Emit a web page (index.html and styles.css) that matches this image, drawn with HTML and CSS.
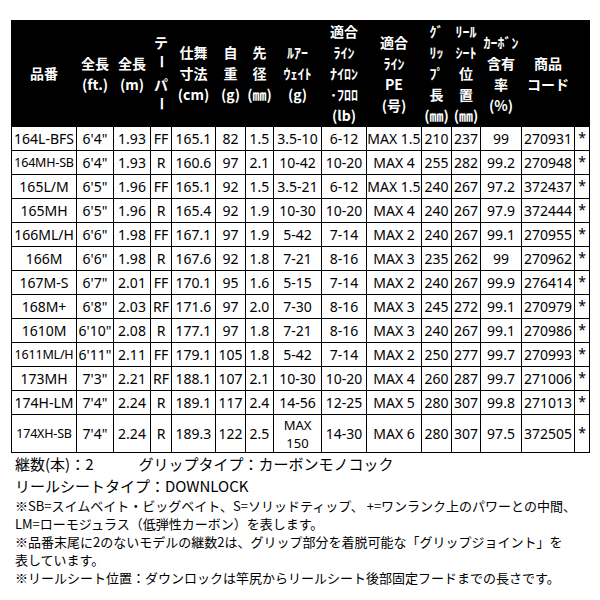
FILE: index.html
```html
<!DOCTYPE html>
<html lang="ja">
<head>
<meta charset="utf-8">
<title>Spec</title>
<link rel="stylesheet" href="styles.css">
</head>
<body>
<table class="spec">
<colgroup>
<col class="w65"><col class="w37"><col class="w37"><col class="w21"><col class="w44"><col class="w30"><col class="w28"><col class="w48"><col class="w45"><col class="w55"><col class="w30"><col class="w29"><col class="w41"><col class="w53"><col class="w15">
</colgroup>
<thead>
<tr>
<th>品番</th>
<th>全長<br>(ft.)</th>
<th>全長<br>(m)</th>
<th>テ<br><span class="v">ー</span><br>パ<br><span class="v">ー</span></th>
<th>仕舞<br>寸法<br>(cm)</th>
<th>自<br>重<br>(g)</th>
<th>先<br>径<br>(㎜)</th>
<th>ﾙｱｰ<br>ｳｪｲﾄ<br>(g)</th>
<th>適合<br>ﾗｲﾝ<br>ﾅｲﾛﾝ<br>･ﾌﾛﾛ<br>(lb)</th>
<th>適合<br>ﾗｲﾝ<br>PE<br>(号)</th>
<th>ｸﾞ<br>ﾘｯ<br>ﾌﾟ<br>長<br>(㎜)</th>
<th>ﾘｰﾙ<br>ｼｰﾄ<br>位<br>置<br>(㎜)</th>
<th>ｶｰﾎﾞﾝ<br>含有<br>率<br>(%)</th>
<th>商品<br>コード</th>
<th></th>
</tr>
</thead>
<tbody>
<tr><td>164L-BFS</td><td>6'4"</td><td>1.93</td><td>FF</td><td>165.1</td><td>82</td><td>1.5</td><td>3.5-10</td><td>6-12</td><td>MAX 1.5</td><td>210</td><td>237</td><td>99</td><td>270931</td><td class="ast">*</td></tr>
<tr><td class="small">164MH-SB</td><td>6'4"</td><td>1.93</td><td>R</td><td>160.6</td><td>97</td><td>2.1</td><td>10-42</td><td>10-20</td><td>MAX 4</td><td>255</td><td>282</td><td>99.2</td><td>270948</td><td class="ast">*</td></tr>
<tr><td>165L/M</td><td>6'5"</td><td>1.96</td><td>FF</td><td>165.1</td><td>92</td><td>1.5</td><td>3.5-21</td><td>6-12</td><td>MAX 1.5</td><td>240</td><td>267</td><td>97.2</td><td>372437</td><td class="ast">*</td></tr>
<tr><td>165MH</td><td>6'5"</td><td>1.96</td><td>R</td><td>165.4</td><td>92</td><td>1.9</td><td>10-30</td><td>10-20</td><td>MAX 4</td><td>240</td><td>267</td><td>97.9</td><td>372444</td><td class="ast">*</td></tr>
<tr><td>166ML/H</td><td>6'6"</td><td>1.98</td><td>FF</td><td>167.1</td><td>97</td><td>1.9</td><td>5-42</td><td>7-14</td><td>MAX 2</td><td>240</td><td>267</td><td>99.1</td><td>270955</td><td class="ast">*</td></tr>
<tr><td>166M</td><td>6'6"</td><td>1.98</td><td>R</td><td>167.6</td><td>92</td><td>1.8</td><td>7-21</td><td>8-16</td><td>MAX 3</td><td>235</td><td>262</td><td>99</td><td>270962</td><td class="ast">*</td></tr>
<tr><td>167M-S</td><td>6'7"</td><td>2.01</td><td>FF</td><td>170.1</td><td>95</td><td>1.6</td><td>5-15</td><td>7-14</td><td>MAX 2</td><td>240</td><td>267</td><td>99.9</td><td>276414</td><td class="ast">*</td></tr>
<tr><td>168M+</td><td>6'8"</td><td>2.03</td><td>RF</td><td>171.6</td><td>97</td><td>2.0</td><td>7-30</td><td>8-16</td><td>MAX 3</td><td>245</td><td>272</td><td>99.1</td><td>270979</td><td class="ast">*</td></tr>
<tr><td>1610M</td><td>6'10"</td><td>2.08</td><td>R</td><td>177.1</td><td>97</td><td>1.8</td><td>7-21</td><td>8-16</td><td>MAX 3</td><td>240</td><td>267</td><td>99.1</td><td>270986</td><td class="ast">*</td></tr>
<tr><td class="small">1611ML/H</td><td>6'11"</td><td>2.11</td><td>FF</td><td>179.1</td><td>105</td><td>1.8</td><td>5-42</td><td>7-14</td><td>MAX 2</td><td>250</td><td>277</td><td>99.7</td><td>270993</td><td class="ast">*</td></tr>
<tr><td>173MH</td><td>7'3"</td><td>2.21</td><td>RF</td><td>188.1</td><td>107</td><td>2.1</td><td>10-30</td><td>10-20</td><td>MAX 4</td><td>260</td><td>287</td><td>99.7</td><td>271006</td><td class="ast">*</td></tr>
<tr><td>174H-LM</td><td>7'4"</td><td>2.24</td><td>R</td><td>189.1</td><td>117</td><td>2.4</td><td>14-56</td><td>12-25</td><td>MAX 5</td><td>280</td><td>307</td><td>99.8</td><td>271013</td><td class="ast">*</td></tr>
<tr class="tall"><td class="small">174XH-SB</td><td>7'4"</td><td>2.24</td><td>R</td><td>189.3</td><td>122</td><td>2.5</td><td class="two">MAX<br>150</td><td>14-30</td><td>MAX 6</td><td>280</td><td>307</td><td>97.5</td><td>372505</td><td class="ast">*</td></tr>
</tbody>
</table>
<div class="notes">
<p class="big">継数(本)：2　　　グリップタイプ：カーボンモノコック</p>
<p class="big">リールシートタイプ：DOWNLOCK</p>
<p class="sm">※SB=スイムベイト・ビッグベイト、S=ソリッドティップ、 +=ワンランク上のパワーとの中間、<br>LM=ローモジュラス（低弾性カーボン）を表します。</p>
<p class="sm">※品番末尾に2のないモデルの継数2は、グリップ部分を着脱可能な「グリップジョイント」を<br>表しています。</p>
<p class="sm">※リールシート位置：ダウンロックは竿尻からリールシート後部固定フードまでの長さです。</p>
</div>
</body>
</html>
```

FILE: styles.css
```css
html, body {
  margin: 0;
  background: #fff;
}
body {
  padding: 20px 0 0 11px;
  font-family: "Noto Sans", "Noto Sans CJK JP", sans-serif;
  color: #000;
}
.spec {
  border-collapse: collapse;
  table-layout: fixed;
  width: 578px;
}
.w65 { width: 65px; }
.w37 { width: 37px; }
.w21 { width: 21px; }
.w44 { width: 44px; }
.w30 { width: 30px; }
.w28 { width: 28px; }
.w48 { width: 48px; }
.w45 { width: 45px; }
.w55 { width: 55px; }
.w29 { width: 29px; }
.w41 { width: 41px; }
.w53 { width: 53px; }
.w15 { width: 15px; }

.spec thead tr { height: 105px; }
.spec th {
  background: #000;
  color: #fff;
  font-family: "Noto Sans CJK JP", sans-serif;
  font-weight: bold;
  font-size: 14px;
  line-height: 21px;
  padding: 0;
  border: 1px solid #000;
  text-align: center;
  vertical-align: middle;
  white-space: nowrap;
}
.v {
  display: inline-block;
  writing-mode: vertical-rl;
}
.spec tbody tr { height: 24px; }
.spec tbody tr.tall { height: 35px; }
.spec td {
  border: 1px solid #000;
  padding: 0;
  text-align: center;
  vertical-align: middle;
  font-size: 14px;
  line-height: 17px;
  white-space: nowrap;
  overflow: visible;
}
.spec td.small { font-size: 12.5px; letter-spacing: -0.2px; }
.spec td.two { font-size: 13px; line-height: 18px; padding-top: 1px; }
.spec td.ast { vertical-align: middle; padding-bottom: 2px; }

.notes {
  padding-left: 4px;
  font-family: "Noto Sans CJK JP", sans-serif;
}
.notes p { margin: 0; }
.notes .big {
  font-size: 15px;
  line-height: 22px;
}
.notes .sm {
  font-size: 13px;
  line-height: 18px;
}
```
